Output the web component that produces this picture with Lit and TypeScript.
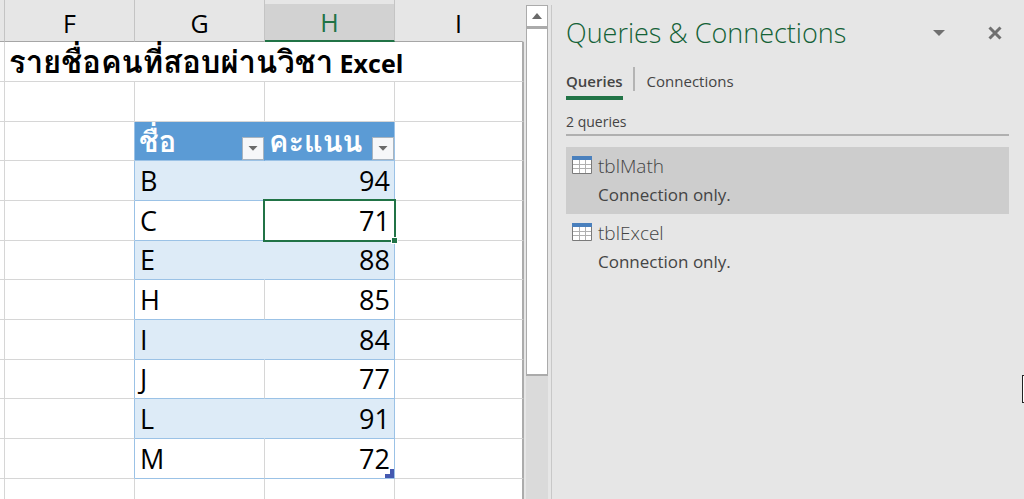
import { LitElement, html, css, svg, nothing } from "lit";
import { customElement, state } from "lit/decorators.js";
import { classMap } from "lit/directives/class-map.js";

type Score = { name: string; score: number };

const SCORES: Score[] = [
  { name: "B", score: 94 },
  { name: "C", score: 71 },
  { name: "E", score: 88 },
  { name: "H", score: 85 },
  { name: "I", score: 84 },
  { name: "J", score: 77 },
  { name: "L", score: 91 },
  { name: "M", score: 72 },
];

@customElement("sheet-grid")
class SheetGrid extends LitElement {
  static styles = css`
    :host {
      display: block;
      overflow: hidden;
      background: #fff;
      font-family: "Open Sans", sans-serif;
      font-size: 27px;
      line-height: 32px;
      color: #000;
    }
    table {
      table-layout: fixed;
      width: 100%;
      border-collapse: separate;
      border-spacing: 0;
    }
    .edge { width: 5px; }
    .col { width: 130px; }
    th, td {
      box-sizing: border-box;
      height: 40px;
      padding: 0;
      border-right: 1px solid #d6d6d6;
      border-bottom: 1px solid #d6d6d6;
      font-weight: 400;
      white-space: nowrap;
      position: relative;
    }
    tbody tr:nth-child(3n) > * { height: 39px; }
    thead th {
      height: 42px;
      padding-top: 4px;
      border-right-color: #c4c4c4;
      border-bottom-color: #a6a6a6;
      background: #e6e6e6;
      font-size: 25px;
    }
    thead .active {
      background: linear-gradient(#e6e6e6 4px, #d2d2d2 4px);
      color: #217346;
      border-bottom: 2px solid #217346;
    }
    td:last-child, th:last-child { border-right: 2px solid #ababab; }
    thead th:last-child { border-right-color: #e6e6e6; }
    .title {
      padding: 2px 0 0 4px;
      font-size: 25px;
      font-weight: 700;
    }
    .thai {
      font-family: "Waree", "Loma", "Garuda", "Noto Sans", sans-serif;
      font-size: 29px;
    }
    .title .thai { font-size: 31px; }
    .before { border-right-color: #9bc2e6; }
    .head {
      background: #5b9bd5;
      border-color: #9bc2e6;
      color: #fff;
      font-weight: 700;
      text-align: left;
      padding: 2px 0 0 4px;
    }
    .head.name { border-right-color: #5b9bd5; }
    td.name { padding-left: 5px; }
    .score { text-align: right; padding-right: 4px; border-right-color: #9bc2e6; }
    .name, .score { border-bottom-color: #9bc2e6; }
    .band .name, .band .score { background: #ddebf7; }
    .band .name { border-right-color: #ddebf7; }
    .filter {
      position: absolute;
      right: 0;
      bottom: 0;
      width: 22px;
      height: 23px;
      padding: 0;
      border: 1px solid #a9b4bf;
      background: #f6f7f9;
      display: grid;
      place-items: center;
    }
    .current { z-index: 1; }
    .selection {
      position: absolute;
      inset: -2px;
      border: 2px solid #217346;
    }
    .handle {
      position: absolute;
      right: -4px;
      bottom: -4px;
      width: 5px;
      height: 5px;
      border: 1px solid #fff;
      background: #217346;
    }
    .corner {
      position: absolute;
      right: 0;
      bottom: 0;
      width: 9px;
      height: 9px;
      display: block;
    }
  `;

  private filter(label: string) {
    return html`<button class="filter" aria-label=${`Filter ${label}`}>
      <svg width="10" height="5" viewBox="0 0 10 5"><path d="M0.5 0h9L5 4.800z" fill="#6a6a6a" /></svg>
    </button>`;
  }

  private blankRow() {
    return html`<tr><td></td><td></td><td></td><td></td><td></td></tr>`;
  }

  render() {
    return html`
      <table>
        <colgroup>
          <col class="edge" /><col class="col" /><col class="col" /><col class="col" /><col />
        </colgroup>
        <thead>
          <tr>
            <th></th><th scope="col">F</th><th scope="col">G</th>
            <th scope="col" class="active">H</th><th scope="col">I</th>
          </tr>
        </thead>
        <tbody>
          <tr><td></td><td class="title" colspan="4"><span class="thai">รายชื่อคนที่สอบผ่านวิชา</span> Excel</td></tr>
          ${this.blankRow()}
          <tr>
            <td></td><td class="before"></td>
            <th scope="col" class="head name"><span class="thai">ชื่อ</span>${this.filter("ชื่อ")}</th>
            <th scope="col" class="head"><span class="thai">คะแนน</span>${this.filter("คะแนน")}</th>
            <td></td>
          </tr>
          ${SCORES.map(
            (row, i) => html`<tr class=${classMap({ band: i % 2 === 0 })}>
              <td></td><td class="before"></td>
              <td class="name">${row.name}</td>
              <td class=${classMap({ score: true, current: i === 1 })}>${row.score}${i === 1
                ? html`<span class="selection"></span><span class="handle"></span>`
                : nothing}${i === SCORES.length - 1
                ? html`<svg class="corner" viewBox="0 0 9 9"><path d="M5 0h4v9H0V5h5z" fill="#4459b0" /></svg>`
                : nothing}</td>
              <td></td>
            </tr>`
          )}
          ${this.blankRow()}
        </tbody>
      </table>
    `;
  }
}

@customElement("sheet-scrollbar")
class SheetScrollbar extends LitElement {
  static styles = css`
    :host {
      display: flex;
      flex-direction: column;
      box-sizing: border-box;
      padding: 5px 3px 0 2px;
      background: #e6e6e6;
    }
    .up {
      box-sizing: border-box;
      height: 22px;
      width: 100%;
      padding: 0;
      border: 1px solid #ababab;
      background: #fff;
      display: grid;
      place-items: center;
    }
    .track { flex: 1; background: #dadada; }
    .thumb {
      box-sizing: border-box;
      height: 74%;
      border: 1px solid #ababab;
      border-top-width: 2px;
      border-bottom-width: 2px;
      background: #fff;
    }
  `;
  render() {
    return html`
      <button class="up" aria-label="Scroll up">
        <svg width="10" height="6" viewBox="0 0 10 6"><path d="M5 0l5 6H0z" fill="#6a6a6a" /></svg>
      </button>
      <div class="track"><div class="thumb"></div></div>
    `;
  }
}

@customElement("query-pane")
class QueryPane extends LitElement {
  static styles = css`
    :host {
      display: block;
      box-sizing: border-box;
      padding: 11px 15px 16px 14px;
      border-left: 1px solid #c8c8c8;
      font-family: "Open Sans", sans-serif;
      font-size: 16px;
      line-height: 24px;
      color: #444;
    }
    button { font: inherit; color: inherit; background: none; border: 0; padding: 0; }
    .top { display: flex; align-items: center; height: 34px; }
    h1 {
      flex: 1;
      margin: 0;
      font-size: 27px;
      line-height: 34px;
      font-weight: 300;
      color: #146237;
      white-space: nowrap;
    }
    .icon { width: 16px; height: 16px; display: grid; place-items: center; }
    .tools { display: flex; gap: 40px; padding-right: 6px; }
    .tabs { display: flex; margin-top: 17px; height: 34px; }
    .tab { height: 33px; line-height: 28px; padding-bottom: 5px; font-size: 15px; }
    .tab.on { font-weight: 600; border-bottom: 4px solid #217346; padding-bottom: 1px; }
    .rule { width: 2px; height: 24px; margin: 0 12px 0 10px; background: #b4b4b4; }
    .count {
      margin: 9px 0 11px;
      border-bottom: 2px solid #b0b0b0;
      font-size: 14px;
    }
    ul { list-style: none; margin: 0; padding: 0; }
    .item {
      display: grid;
      grid-template-columns: 20px 1fr;
      column-gap: 6px;
      row-gap: 4px;
      width: 100%;
      height: 67px;
      box-sizing: border-box;
      padding: 6px;
      align-content: start;
      text-align: left;
    }
    .item.on { background: #cdcdcd; }
    .item svg { margin-top: 3px; }
    .name { font-size: 19px; line-height: 26px; font-weight: 300; }
    .state { grid-column: 2; font-size: 17px; }
  `;

  @state() private selected = "tblMath";

  private tableIcon() {
    return svg`<svg width="20" height="18" viewBox="0 0 20 18">
      <path d="M0.5 0.5h19v17H0.5z" fill="#fff" stroke="#7a7a7a" />
      <path d="M1 8.5h18M1 12.5h18M7.500 4v13M13.500 4v13" stroke="#b0b0b0" fill="none" />
      <path d="M0 0h20v4H0z" fill="#4a80bd" />
    </svg>`;
  }

  render() {
    return html`
      <div class="top">
        <h1>Queries &amp; Connections</h1>
        <div class="tools">
          <button class="icon" aria-label="Pane options">
            <svg width="12" height="6" viewBox="0 0 12 6"><path d="M0 0h12L6 6z" fill="#707070" /></svg>
          </button>
          <button class="icon" aria-label="Close">
            <svg width="14" height="14" viewBox="0 0 14 14">
              <path d="M1.500 1.500l11 11M12.500 1.500l-11 11" stroke="#707070" stroke-width="3" />
            </svg>
          </button>
        </div>
      </div>
      <div class="tabs" role="tablist">
        <button class="tab on" role="tab" aria-selected="true">Queries</button>
        <span class="rule"></span>
        <button class="tab" role="tab" aria-selected="false">Connections</button>
      </div>
      <p class="count">2 queries</p>
      <ul>
        ${["tblMath", "tblExcel"].map(
          (name) => html`<li>
            <button
              class=${classMap({ item: true, on: name === this.selected })}
              @click=${() => (this.selected = name)}
            >
              ${this.tableIcon()}
              <span class="name">${name}</span>
              <span class="state">Connection only.</span>
            </button>
          </li>`
        )}
      </ul>
    `;
  }
}

@customElement("app-root")
class AppRoot extends LitElement {
  static styles = css`
    :host {
      display: flex;
      position: relative;
      height: 100vh;
      overflow: hidden;
      background: #e6e6e6;
    }
    sheet-grid { flex: 0 0 524px; }
    sheet-scrollbar { flex: 0 0 27px; }
    query-pane { flex: 1; min-width: 0; margin-top: 5px; }
    .peek {
      position: absolute;
      right: -8px;
      top: 375px;
      width: 8px;
      height: 26px;
      border: 1px solid #222;
      background: #fff;
    }
  `;
  render() {
    return html`
      <sheet-grid></sheet-grid>
      <sheet-scrollbar></sheet-scrollbar>
      <query-pane></query-pane>
      <span class="peek"></span>
    `;
  }
}
